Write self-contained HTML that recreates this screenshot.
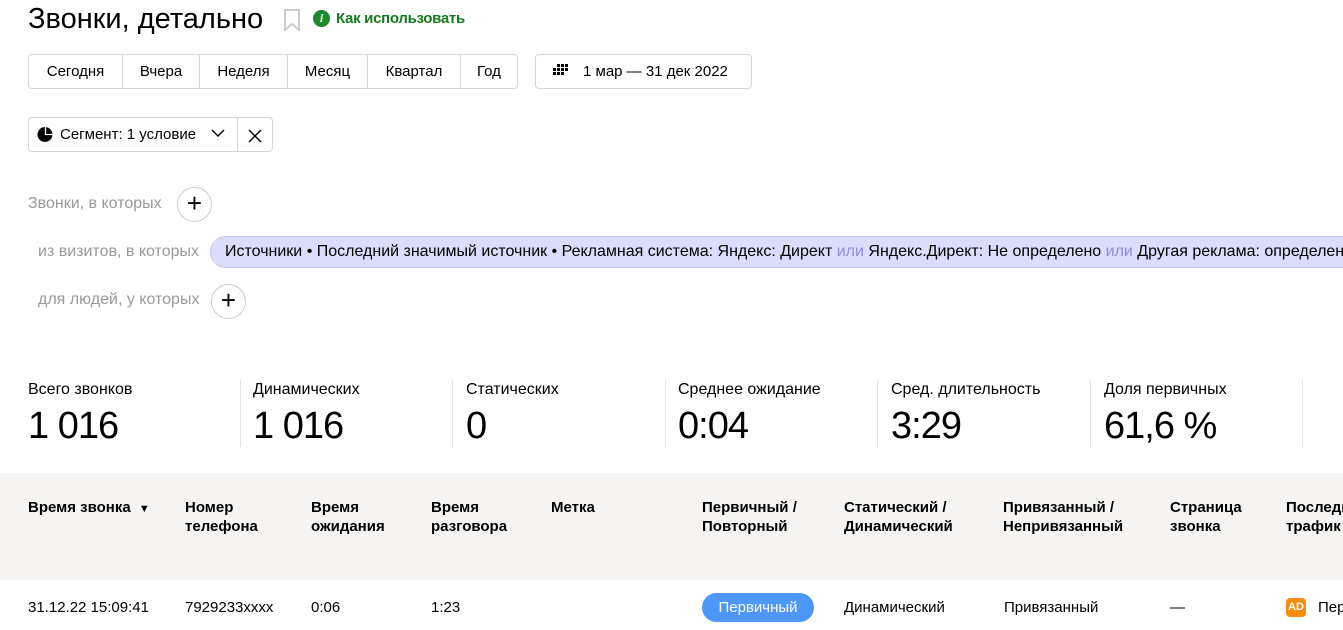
<!DOCTYPE html>
<html><head><meta charset="utf-8"><style>
*{margin:0;padding:0;box-sizing:border-box}
body{width:1343px;height:630px;overflow:hidden;background:#fff;font-family:"Liberation Sans",sans-serif;color:#000;position:relative}
.a{position:absolute;white-space:nowrap}
.btn{position:absolute;top:54px;height:35px;border:1px solid #d6d6d6;font-size:15px;line-height:33px;text-align:center;background:#fff}
.lbl{color:#999;font-size:16px}
.plus{position:absolute;width:35px;height:35px;border:1px solid #ccc;border-radius:50%;font-size:26px;line-height:31px;text-align:center;font-weight:300}
.st{position:absolute;top:381px;font-size:16px}
.st b{display:block;font-weight:normal;font-size:38px;margin-top:6px;letter-spacing:-1px}
.dv{position:absolute;top:380px;width:1px;height:67px;background:#e3e3e3}
.th{position:absolute;top:498px;font-size:15px;font-weight:bold;line-height:19px}
.td{position:absolute;top:599px;font-size:15px}
</style></head><body>
<div class="a" style="left:28px;top:1px;font-size:29px;line-height:36px">Звонки, детально</div>
<svg class="a" style="left:284px;top:9px" width="16" height="22"><path d="M1 1H15V21L8 15L1 21Z" fill="none" stroke="#ccc" stroke-width="2"/></svg>
<div class="a" style="left:313px;top:10px;width:17px;height:17px;border-radius:50%;background:#1e8a2e;color:#fff;font:italic bold 12px/17px 'Liberation Serif',serif;text-align:center">i</div>
<div class="a" style="left:336px;top:10px;font-size:15px;color:#137a1e;font-weight:bold;letter-spacing:-0.3px">Как использовать</div>

<div class="btn" style="left:28px;width:95px;border-radius:4px 0 0 4px">Сегодня</div>
<div class="btn" style="left:122px;width:78px">Вчера</div>
<div class="btn" style="left:199px;width:89px">Неделя</div>
<div class="btn" style="left:287px;width:81px">Месяц</div>
<div class="btn" style="left:367px;width:94px">Квартал</div>
<div class="btn" style="left:460px;width:58px;border-radius:0 4px 4px 0">Год</div>
<div class="btn" style="left:535px;width:217px;border-radius:4px;text-align:left;padding-left:47px">1 мар — 31 дек 2022</div>
<svg class="a" style="left:551px;top:64px" width="18" height="14"><g fill="#000"><rect x="6" y="0" width="3" height="3"/><rect x="10" y="0" width="3" height="3"/><rect x="14" y="0" width="3" height="3"/><rect x="2" y="4" width="3" height="3"/><rect x="6" y="4" width="3" height="3"/><rect x="10" y="4" width="3" height="3"/><rect x="14" y="4" width="3" height="3"/><rect x="2" y="8" width="3" height="3"/><rect x="6" y="8" width="3" height="3"/><rect x="10" y="8" width="3" height="3"/></g></svg>

<div class="btn" style="top:117px;left:28px;width:210px;border-radius:4px 0 0 4px;text-align:left;padding-left:31px">Сегмент: 1 условие</div>
<svg class="a" style="left:37px;top:126px" width="17" height="17"><circle cx="8" cy="8.5" r="7.5" fill="#000"/><path d="M8.5 1V8.5H16" fill="none" stroke="#fff" stroke-width="1.3"/></svg>
<svg class="a" style="left:211px;top:129px" width="14" height="9"><path d="M1 1L7 7L13 1" fill="none" stroke="#000" stroke-width="1.4"/></svg>
<div class="btn" style="top:117px;left:237px;width:36px;border-radius:0 4px 4px 0"></div>
<svg class="a" style="left:248px;top:129px" width="14" height="14"><path d="M1 1L13 13M13 1L1 13" stroke="#000" stroke-width="1.4"/></svg>

<div class="a lbl" style="left:28px;top:195px">Звонки, в которых</div>
<div class="plus" style="left:177px;top:187px">+</div>
<div class="a lbl" style="left:38px;top:243px">из визитов, в которых</div>
<div class="a" style="left:210px;top:236px;width:1200px;height:32px;background:#dcdcfc;border:1px solid #c9c9f3;border-radius:16px;font-size:16px;line-height:30px;padding-left:14px;overflow:hidden">Источники • Последний значимый источник • Рекламная система: Яндекс: Директ <span style="color:#8d8de0">или</span> Яндекс.Директ: Не определено <span style="color:#8d8de0">или</span> Другая реклама: определено</div>
<div class="a lbl" style="left:38px;top:291px">для людей, у которых</div>
<div class="plus" style="left:211px;top:284px">+</div>

<div class="st" style="left:28px">Всего звонков<b>1 016</b></div>
<div class="dv" style="left:240px"></div>
<div class="st" style="left:253px">Динамических<b>1 016</b></div>
<div class="dv" style="left:452px"></div>
<div class="st" style="left:466px">Статических<b>0</b></div>
<div class="dv" style="left:665px"></div>
<div class="st" style="left:678px">Среднее ожидание<b>0:04</b></div>
<div class="dv" style="left:877px"></div>
<div class="st" style="left:891px">Сред. длительность<b>3:29</b></div>
<div class="dv" style="left:1090px"></div>
<div class="st" style="left:1104px">Доля первичных<b>61,6 %</b></div>
<div class="dv" style="left:1302px"></div>

<div class="a" style="left:0;top:473px;width:1343px;height:107px;background:#f5f4f2"></div>
<div class="th" style="left:28px">Время звонка <span style="font-size:11px;margin-left:4px">▼</span></div>
<div class="th" style="left:185px">Номер<br>телефона</div>
<div class="th" style="left:311px">Время<br>ожидания</div>
<div class="th" style="left:431px">Время<br>разговора</div>
<div class="th" style="left:551px">Метка</div>
<div class="th" style="left:702px">Первичный /<br>Повторный</div>
<div class="th" style="left:844px">Статический /<br>Динамический</div>
<div class="th" style="left:1003px">Привязанный /<br>Непривязанный</div>
<div class="th" style="left:1170px">Страница<br>звонка</div>
<div class="th" style="left:1286px">Последний<br>трафик</div>

<div class="td" style="left:28px">31.12.22 15:09:41</div>
<div class="td" style="left:185px">7929233xxxx</div>
<div class="td" style="left:311px">0:06</div>
<div class="td" style="left:431px">1:23</div>
<div class="a" style="left:702px;top:593px;width:112px;height:29px;border-radius:15px;background:#4c97f7;color:#fff;font-size:15px;line-height:29px;text-align:center">Первичный</div>
<div class="td" style="left:844px">Динамический</div>
<div class="td" style="left:1004px">Привязанный</div>
<div class="td" style="left:1170px">—</div>
<div class="a" style="left:1286px;top:598px;width:20px;height:19px;border-radius:4px;background:#f98b0d;color:#fff;font-size:11px;font-weight:bold;line-height:19px;text-align:center">AD</div>
<div class="td" style="left:1318px">Переходы</div>
</body></html>
